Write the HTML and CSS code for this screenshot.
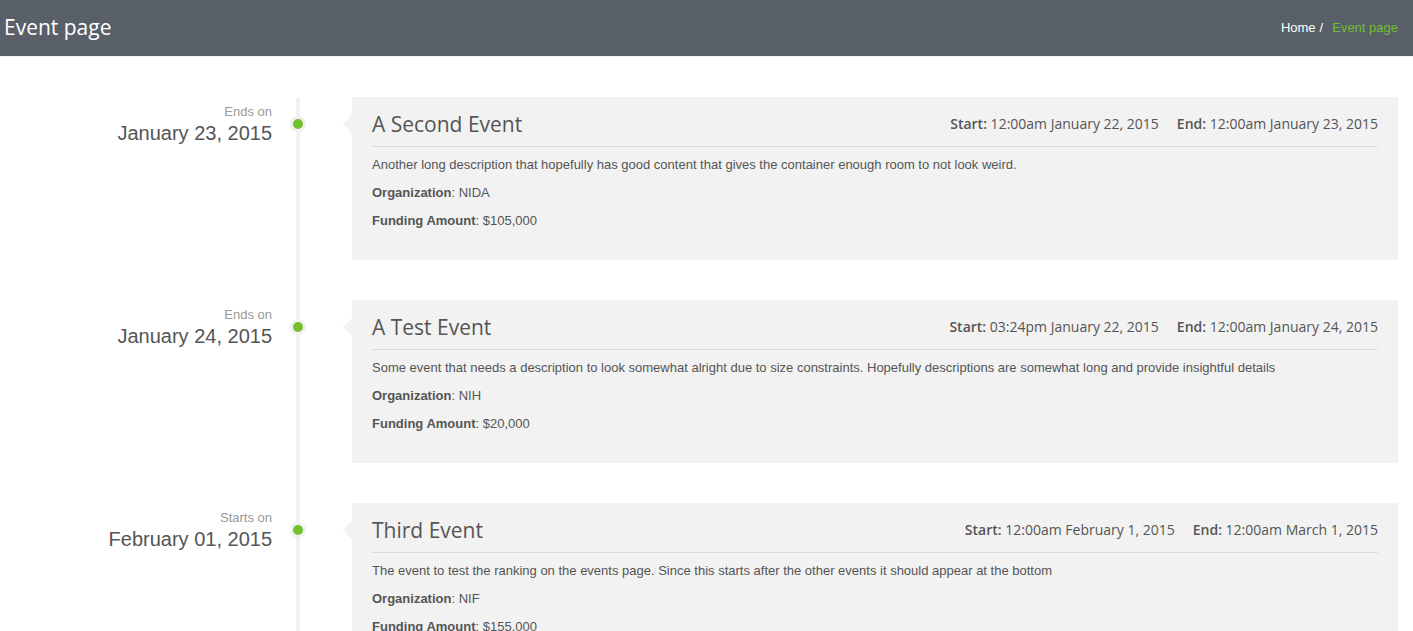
FILE: index.html
```html
<!DOCTYPE html>
<html lang="en">
<head>
<meta charset="utf-8">
<title>Event page</title>
<link rel="stylesheet" href="styles.css">
</head>
<body>
<header class="topbar">
  <h1 class="page-title">Event page</h1>
  <ul class="breadcrumb">
    <li class="crumb"><a class="crumb-link" href="#">Home</a><span class="crumb-sep">/</span></li>
    <li class="crumb crumb-active">Event page</li>
  </ul>
</header>

<main class="timeline">
  <section class="tl-row">
    <div class="tl-date">
      <span class="tl-label">Ends on</span>
      <span class="tl-day">January 23, 2015</span>
    </div>
    <div class="tl-axis"><span class="tl-dot"></span></div>
    <article class="tl-card">
      <div class="card-head">
        <h2 class="card-title">A Second Event</h2>
        <div class="card-times">
          <span class="time"><b>Start:</b> 12:00am January 22, 2015</span>
          <span class="time"><b>End:</b> 12:00am January 23, 2015</span>
        </div>
      </div>
      <p class="card-text">Another long description that hopefully has good content that gives the container enough room to not look weird.</p>
      <p class="card-text"><b>Organization</b>: NIDA</p>
      <p class="card-text"><b>Funding Amount</b>: $105,000</p>
    </article>
  </section>

  <section class="tl-row">
    <div class="tl-date">
      <span class="tl-label">Ends on</span>
      <span class="tl-day">January 24, 2015</span>
    </div>
    <div class="tl-axis"><span class="tl-dot"></span></div>
    <article class="tl-card">
      <div class="card-head">
        <h2 class="card-title">A Test Event</h2>
        <div class="card-times">
          <span class="time"><b>Start:</b> 03:24pm January 22, 2015</span>
          <span class="time"><b>End:</b> 12:00am January 24, 2015</span>
        </div>
      </div>
      <p class="card-text">Some event that needs a description to look somewhat alright due to size constraints. Hopefully descriptions are somewhat long and provide insightful details</p>
      <p class="card-text"><b>Organization</b>: NIH</p>
      <p class="card-text"><b>Funding Amount</b>: $20,000</p>
    </article>
  </section>

  <section class="tl-row">
    <div class="tl-date">
      <span class="tl-label">Starts on</span>
      <span class="tl-day">February 01, 2015</span>
    </div>
    <div class="tl-axis"><span class="tl-dot"></span></div>
    <article class="tl-card">
      <div class="card-head">
        <h2 class="card-title">Third Event</h2>
        <div class="card-times">
          <span class="time"><b>Start:</b> 12:00am February 1, 2015</span>
          <span class="time"><b>End:</b> 12:00am March 1, 2015</span>
        </div>
      </div>
      <p class="card-text">The event to test the ranking on the events page. Since this starts after the other events it should appear at the bottom</p>
      <p class="card-text"><b>Organization</b>: NIF</p>
      <p class="card-text"><b>Funding Amount</b>: $155,000</p>
    </article>
  </section>
</main>
</body>
</html>
```

FILE: styles.css
```css
* { box-sizing: border-box; }

html, body {
  margin: 0;
  padding: 0;
  background: #fff;
}

body {
  font-family: "Liberation Sans", Arial, sans-serif;
  color: #555;
}

.topbar {
  height: 57px;
  background: #585f69;
  border-bottom: 1px solid #eef0f2;
  display: flex;
  align-items: center;
  justify-content: space-between;
  padding: 0 15px 0 4px;
}

.page-title {
  margin: 0 0 3px 0;
  font-family: "Open Sans", sans-serif;
  font-weight: 400;
  font-size: 21px;
  line-height: 30px;
  color: #fff;
}

.breadcrumb {
  list-style: none;
  margin: 0;
  padding: 0;
  display: flex;
  font-size: 13px;
  line-height: 16px;
}

.crumb { color: #fff; }

.crumb-link {
  color: #fff;
  text-decoration: none;
}

.crumb-sep {
  margin: 0 9px 0 4px;
  color: #fff;
}

.crumb-active { color: #72c02c; }

.timeline {
  padding: 40px 15px 0 0;
}

.tl-row {
  display: flex;
  align-items: stretch;
}

.tl-date {
  width: 272px;
  flex: none;
  text-align: right;
  padding-top: 8px;
}

.tl-label {
  display: block;
  font-size: 13px;
  line-height: 14px;
  color: #999;
}

.tl-day {
  display: block;
  font-size: 20px;
  line-height: 29px;
  color: #555;
}

.tl-axis {
  width: 80px;
  flex: none;
  background: linear-gradient(#f1f1f1, #f1f1f1) no-repeat 24px 0 / 4px 100%;
}

.tl-dot {
  display: block;
  width: 16px;
  height: 16px;
  margin: 19px 0 0 18px;
  border-radius: 50%;
  background: #72c02c;
  border: 3px solid #f1f1f1;
}

.tl-card {
  flex: 1;
  position: relative;
  background: #f2f2f2;
  padding: 16px 20px 20px;
  margin-bottom: 40px;
}

.tl-card::before {
  content: "";
  position: absolute;
  left: -9px;
  top: 18px;
  border-top: 9px solid transparent;
  border-bottom: 9px solid transparent;
  border-right: 9px solid #f2f2f2;
}

.card-head {
  display: flex;
  justify-content: space-between;
  align-items: center;
  padding-bottom: 11px;
  border-bottom: 1px solid #dcdcdc;
  margin-bottom: 9px;
}

.card-title {
  margin: 0;
  font-family: "Open Sans", sans-serif;
  font-weight: 400;
  font-size: 21px;
  line-height: 22px;
  color: #555;
}

.card-times {
  display: flex;
  gap: 18px;
  font-family: "Open Sans", sans-serif;
  font-size: 14px;
  line-height: 20px;
  color: #555;
}

.card-times b { font-weight: 600; }

.card-text {
  margin: 0 0 10px;
  font-size: 13px;
  line-height: 18px;
  color: #555;
}

.card-text b { font-weight: 700; }
```
